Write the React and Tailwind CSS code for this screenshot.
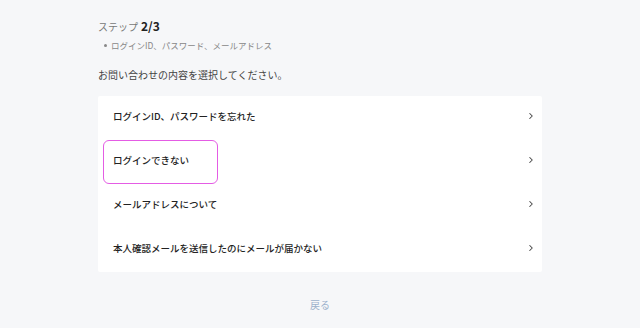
import { ChevronRight } from 'lucide-react';

const items = [
    'ログインID、パスワードを忘れた',
    'ログインできない',
    'メールアドレスについて',
    '本人確認メールを送信したのにメールが届かない',
];

export default function App() {
    return (
        <div
            className="min-h-[328px] w-[640px] bg-[#f6f7f9] text-[#222]"
            style={{ fontFamily: '"Noto Sans CJK JP", "Noto Sans", sans-serif' }}
        >
            <div className="mx-auto w-[444px] pt-[17px]">
                {/* Step */}
                <div className="flex items-baseline h-[16px] text-[10px] text-[#777]">
                    ステップ
                    <span className="ml-[3px] text-[12px] font-bold text-[#222]">2/3</span>
                </div>
                <ul className="mt-[6px] pl-[6px] text-[8.5px] text-[#888] leading-[12px]">
                    <li className="flex items-center">
                        <span className="mr-[4px] inline-block h-[3px] w-[3px] rounded-full bg-[#888]"></span>
                        ログインID、パスワード、メールアドレス
                    </li>
                </ul>
                <p className="mt-[17px] text-[10px] leading-[14px] text-[#444]">
                    お問い合わせの内容を選択してください。
                </p>

                {/* Options */}
                <div className="mt-[14px] bg-white rounded-[2px]">
                    {items.map((label, i) => (
                        <div key={label} className="flex h-[44px] items-center justify-between pl-[5px] pr-[6px]">
                            <div
                                className={
                                    i === 1
                                        ? 'flex h-[44px] items-center rounded-[6px] border-[1.5px] border-[#e45ce4] pl-[9px] pr-[28px] pb-[2px] -mt-[1px]'
                                        : 'flex h-[44px] items-center pl-[10px] pb-[4px]'
                                }
                            >
                                <span className="text-[9.5px] font-medium text-[#222]">{label}</span>
                            </div>
                            <ChevronRight className="mb-[4px] h-[10px] w-[10px] text-[#444]" strokeWidth={2.5} />
                        </div>
                    ))}
                </div>

                <div className="mt-[25px] text-center text-[10px] text-[#9db2cc]">戻る</div>
            </div>
        </div>
    );
}
